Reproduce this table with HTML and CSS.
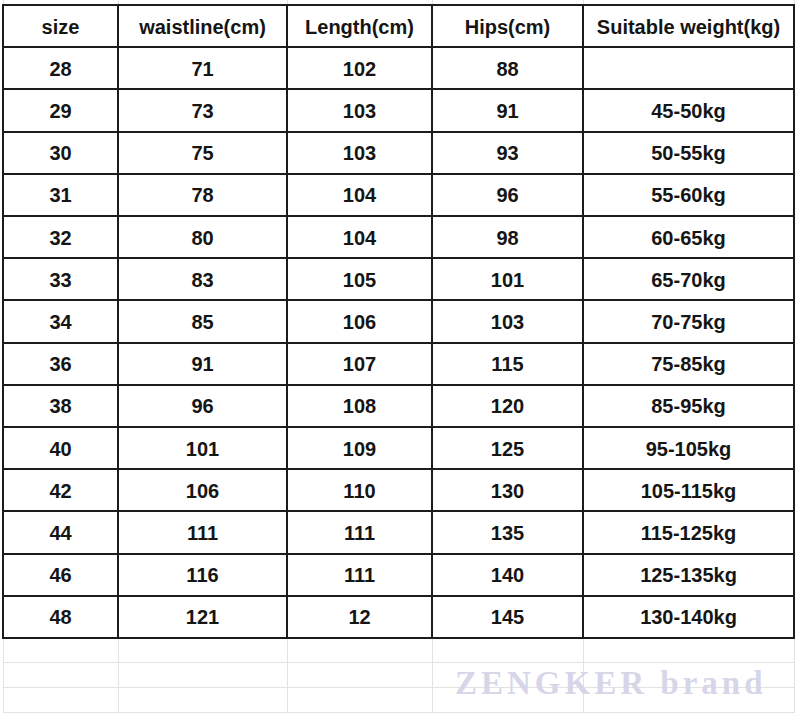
FILE: index.html
```html
<!DOCTYPE html>
<html>
<head>
<meta charset="utf-8">
<link rel="stylesheet" href="styles.css">
</head>
<body>
<div class="sheet">
  <div class="faint-grid top-strip">
    <div></div><div></div><div></div><div></div><div></div>
  </div>
  <div class="size-table">
    <div class="cell">size</div><div class="cell">waistline(cm)</div><div class="cell">Length(cm)</div><div class="cell">Hips(cm)</div><div class="cell">Suitable weight(kg)</div>
    <div class="cell">28</div><div class="cell">71</div><div class="cell">102</div><div class="cell">88</div><div class="cell"></div>
    <div class="cell">29</div><div class="cell">73</div><div class="cell">103</div><div class="cell">91</div><div class="cell">45-50kg</div>
    <div class="cell">30</div><div class="cell">75</div><div class="cell">103</div><div class="cell">93</div><div class="cell">50-55kg</div>
    <div class="cell">31</div><div class="cell">78</div><div class="cell">104</div><div class="cell">96</div><div class="cell">55-60kg</div>
    <div class="cell">32</div><div class="cell">80</div><div class="cell">104</div><div class="cell">98</div><div class="cell">60-65kg</div>
    <div class="cell">33</div><div class="cell">83</div><div class="cell">105</div><div class="cell">101</div><div class="cell">65-70kg</div>
    <div class="cell">34</div><div class="cell">85</div><div class="cell">106</div><div class="cell">103</div><div class="cell">70-75kg</div>
    <div class="cell">36</div><div class="cell">91</div><div class="cell">107</div><div class="cell">115</div><div class="cell">75-85kg</div>
    <div class="cell">38</div><div class="cell">96</div><div class="cell">108</div><div class="cell">120</div><div class="cell">85-95kg</div>
    <div class="cell">40</div><div class="cell">101</div><div class="cell">109</div><div class="cell">125</div><div class="cell">95-105kg</div>
    <div class="cell">42</div><div class="cell">106</div><div class="cell">110</div><div class="cell">130</div><div class="cell">105-115kg</div>
    <div class="cell">44</div><div class="cell">111</div><div class="cell">111</div><div class="cell">135</div><div class="cell">115-125kg</div>
    <div class="cell">46</div><div class="cell">116</div><div class="cell">111</div><div class="cell">140</div><div class="cell">125-135kg</div>
    <div class="cell">48</div><div class="cell">121</div><div class="cell">12</div><div class="cell">145</div><div class="cell">130-140kg</div>
  </div>
  <div class="faint-grid below">
    <div></div><div></div><div></div><div></div><div></div>
    <div></div><div></div><div></div><div></div><div></div>
    <div></div><div></div><div></div><div></div><div></div>
  </div>
  <div class="watermark">ZENGKER brand</div>
</div>
</body>
</html>
```
FILE: styles.css
```css
html, body {
  margin: 0;
  padding: 0;
  background: #ffffff;
}

.sheet {
  position: relative;
  width: 800px;
  height: 713px;
  overflow: hidden;
  background: #ffffff;
}

.faint-grid {
  display: grid;
  grid-template-columns: 115px 169px 145px 151px 211px;
  margin-left: 3px;
  border-left: 1px solid #e2e2e2;
  width: max-content;
}

.faint-grid > div {
  box-sizing: border-box;
  border-right: 1px solid #e2e2e2;
}

.top-strip {
  height: 4px;
}

.below {
  grid-template-rows: 24px 25px 25px;
}

.below > div {
  border-bottom: 1px solid #e2e2e2;
}

.size-table {
  display: grid;
  grid-template-columns: 113px 167px 143px 149px 209px;
  grid-template-rows: repeat(15, 1fr);
  gap: 2px;
  padding: 2px;
  margin-left: 2px;
  height: 635px;
  width: max-content;
  box-sizing: border-box;
  background: #1c1c1c;
}

.cell {
  background: #ffffff;
  display: flex;
  align-items: center;
  justify-content: center;
  padding-top: 2px;
  font-family: "Liberation Sans", Arial, sans-serif;
  font-weight: bold;
  font-size: 20px;
  color: #151515;
  white-space: nowrap;
}

.watermark {
  position: absolute;
  left: 455px;
  top: 667px;
  font-family: "Liberation Serif", "Times New Roman", serif;
  font-weight: bold;
  font-size: 33px;
  line-height: 1;
  letter-spacing: 4px;
  color: #d6d6e8;
  white-space: nowrap;
}
```
